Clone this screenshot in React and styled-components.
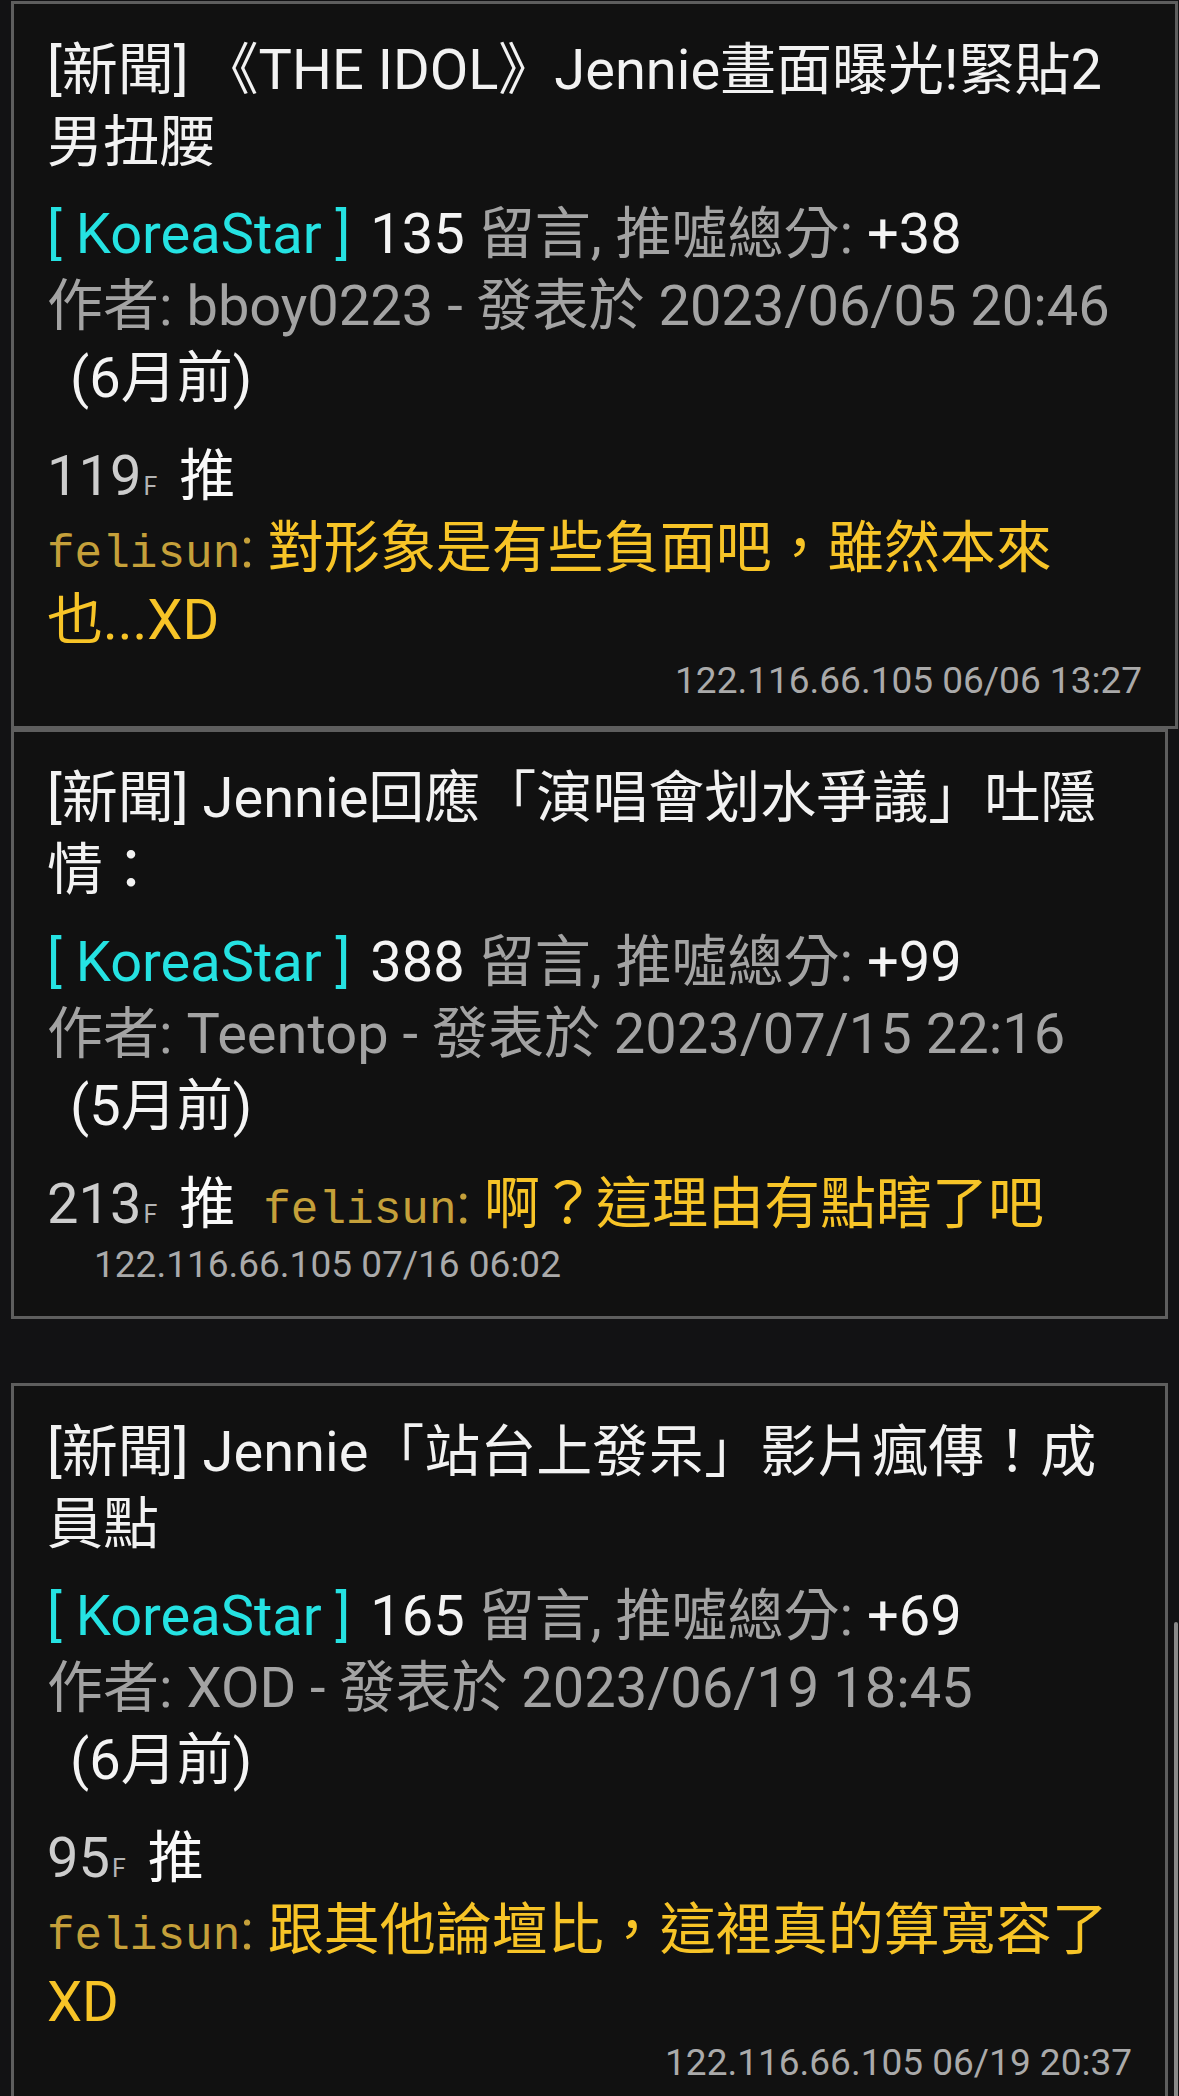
import React from 'react';
import styled, { createGlobalStyle } from 'styled-components';

const Global = createGlobalStyle`
  html, body { margin: 0; padding: 0; background: #121214; }
  body {
    font-family: Roboto, "Noto Sans CJK TC", sans-serif;
    -webkit-font-smoothing: antialiased;
  }
`;

const Page = styled.div`
  position: relative;
  box-sizing: border-box;
  width: 1179px;
  height: 2096px;
  overflow: hidden;
  padding: 1px 0 0 11px;
  display: flex;
  flex-direction: column;
  align-items: flex-start;
`;

const Card = styled.article`
  box-sizing: border-box;
  flex: none;
  width: ${(p) => (p.$wide ? 1167 : 1157)}px;
  margin-top: ${(p) => p.$gap || 0}px;
  background: #111111;
  border: 3px solid #5e5e5e;
  padding: 30px 33px ${(p) => p.$pb}px;
  color: #f2f2f2;
  font-size: 56px;
`;

const Title = styled.div`
  line-height: 72px;
  margin-bottom: 20px;
  color: #f2f2f2;
`;

const Meta = styled.div`
  line-height: 72px;
  color: #a3a3a3;
`;

const Board = styled.span`
  color: #25e2e2;
  margin-right: 6px;
`;

const Bright = styled.span`
  color: #f4f4f4;
`;

const Ago = styled.div`
  line-height: 72px;
  padding-left: 23px;
  color: #f4f4f4;
`;

const PushRow = styled.div`
  display: flex;
  flex-wrap: wrap;
  align-items: baseline;
  column-gap: 28px;
  margin-top: 26px;
  line-height: 72px;
`;

const Floor = styled.span`
  white-space: nowrap;
  color: #cdcdcd;
`;

const FloorMark = styled.span`
  font-size: 25px;
  line-height: 1;
  color: #b4b4b4;
  margin-left: 2px;
`;

const PushTag = styled.span`
  color: #fafafa;
  margin-left: 22px;
`;

const Comment = styled.span`
  min-width: 0;
  color: #f7c427;
`;

const User = styled.span`
  font-family: "Liberation Mono", "DejaVu Sans Mono", monospace;
  font-size: 46px;
  line-height: 1;
  color: #c5a03a;
`;

const Colon = styled.span`
  color: #c5a03a;
`;

const Ip = styled.div`
  font-size: 37px;
  line-height: 50px;
  color: #aaaaaa;
  text-align: ${(p) => (p.$left ? 'left' : 'right')};
  padding-left: ${(p) => (p.$left ? 47 : 0)}px;
`;

const Scrollbar = styled.div`
  position: absolute;
  right: 1px;
  top: 1622px;
  width: 4px;
  height: 480px;
  border-radius: 2px;
  background: #8a8a8a;
`;

const posts = [
  {
    wide: true,
    gap: 0,
    pb: 20,
    title: '[新聞] 《THE IDOL》Jennie畫面曝光!緊貼2男扭腰',
    count: '135',
    score: '+38',
    author: 'bboy0223',
    date: '2023/06/05 20:46',
    ago: '(6月前)',
    floor: '119',
    comment: '對形象是有些負面吧，雖然本來也...XD',
    ip: '122.116.66.105 06/06 13:27',
  },
  {
    gap: 0,
    pb: 26,
    title: '[新聞] Jennie回應「演唱會划水爭議」吐隱情：',
    count: '388',
    score: '+99',
    author: 'Teentop',
    date: '2023/07/15 22:16',
    ago: '(5月前)',
    floor: '213',
    comment: '啊？這理由有點瞎了吧',
    ip: '122.116.66.105 07/16 06:02',
    ipLeft: true,
  },
  {
    gap: 64,
    pb: 26,
    title: '[新聞] Jennie「站台上發呆」影片瘋傳！成員點',
    count: '165',
    score: '+69',
    author: 'XOD',
    date: '2023/06/19 18:45',
    ago: '(6月前)',
    floor: '95',
    comment: '跟其他論壇比，這裡真的算寬容了XD',
    ip: '122.116.66.105 06/19 20:37',
  },
];

function Post({ p }) {
  return (
    <Card $wide={p.wide} $gap={p.gap} $pb={p.pb}>
      <Title>{p.title}</Title>
      <Meta>
        <Board>[ KoreaStar ]</Board> <Bright>{p.count}</Bright> 留言, 推噓總分:{' '}
        <Bright>{p.score}</Bright>
        <br />
        作者: {p.author} - 發表於 {p.date}
      </Meta>
      <Ago>{p.ago}</Ago>
      <PushRow>
        <Floor>
          {p.floor}
          <FloorMark>F</FloorMark>
          <PushTag>推</PushTag>
        </Floor>
        <Comment>
          <User>felisun</User>
          <Colon>:</Colon> {p.comment}
        </Comment>
      </PushRow>
      <Ip $left={p.ipLeft}>{p.ip}</Ip>
    </Card>
  );
}

export default function App() {
  return (
    <>
      <Global />
      <Page>
        {posts.map((p, i) => (
          <Post key={i} p={p} />
        ))}
        <Scrollbar />
      </Page>
    </>
  );
}
